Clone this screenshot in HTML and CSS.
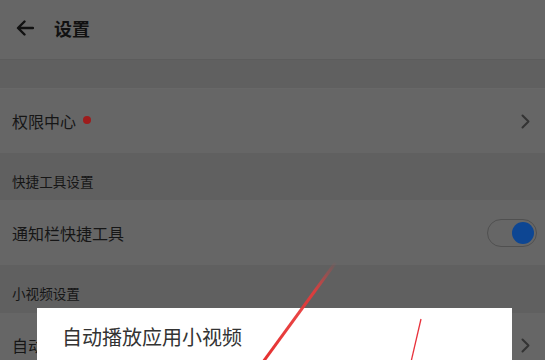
FILE: index.html
```html
<!DOCTYPE html>
<html lang="zh-CN">
<head>
<meta charset="utf-8">
<title>设置</title>
<link rel="stylesheet" href="styles.css">
</head>
<body>
<div class="page">
  <header class="topbar">
    <svg class="back" width="18" height="16" viewBox="0 0 18 16" aria-hidden="true">
      <path d="M17 8H2.5M8.5 1.5L2 8l6.5 6.5" fill="none" stroke="#111" stroke-width="2.4" stroke-linecap="round" stroke-linejoin="round"/>
    </svg>
    <h1 class="title">设置</h1>
  </header>
  <div class="gap"></div>
  <div class="row">
    <span class="label">权限中心</span><span class="dot"></span>
    <svg class="chev" width="9" height="15" viewBox="0 0 9 15" aria-hidden="true"><path d="M1.5 1.5l6 6-6 6" fill="none" stroke="#333" stroke-width="2" stroke-linecap="round" stroke-linejoin="round"/></svg>
  </div>
  <div class="section s1">快捷工具设置</div>
  <div class="row r2">
    <span class="label">通知栏快捷工具</span>
    <span class="toggle"><span class="knob"></span></span>
  </div>
  <div class="section s2">小视频设置</div>
  <div class="row">
    <span class="label">自动播放应用小视频</span>
    <svg class="chev" width="9" height="15" viewBox="0 0 9 15" aria-hidden="true"><path d="M1.5 1.5l6 6-6 6" fill="none" stroke="#333" stroke-width="2" stroke-linecap="round" stroke-linejoin="round"/></svg>
  </div>
</div>
<div class="dialog">
  <p class="dialog-title">自动播放应用小视频</p>
</div>
<svg class="annot" width="545" height="360" viewBox="0 0 545 360" aria-hidden="true">
  <defs>
    <linearGradient id="fade" x1="336" y1="262" x2="264" y2="362" gradientUnits="userSpaceOnUse">
      <stop offset="0" stop-color="#e83a3a" stop-opacity="0"/>
      <stop offset="0.3" stop-color="#e83a3a" stop-opacity="0.9"/>
      <stop offset="1" stop-color="#e53030" stop-opacity="1"/>
    </linearGradient>
  </defs>
  <line x1="336" y1="262" x2="263" y2="362" stroke="url(#fade)" stroke-width="3"/>
  <line x1="421" y1="319" x2="411" y2="362" stroke="#e8323c" stroke-width="1.3"/>
</svg>
</body>
</html>
```
FILE: styles.css
```css
html, body {
  margin: 0;
  padding: 0;
}
body {
  width: 545px;
  height: 360px;
  overflow: hidden;
  background: #666;
  font-family: "Noto Sans CJK SC", "Noto Sans", sans-serif;
  position: relative;
}
.page {
  display: flex;
  flex-direction: column;
}
.topbar {
  height: 60px;
  box-sizing: border-box;
  display: flex;
  align-items: center;
  padding: 0 0 4px 16px;
  background: #666;
  border-bottom: 1px solid #5c5c5c;
}
.back {
  display: block;
  margin-top: 1px;
}
.title {
  margin: 0 0 0 20px;
  font-size: 18px;
  font-weight: 700;
  color: #111;
  line-height: 24px;
}
.gap {
  height: 28px;
  background: #606060;
  border-bottom: 1px solid #686868;
}
.row {
  height: 64px;
  display: flex;
  align-items: center;
  padding: 0 15px 0 12px;
  background: #666;
}
.r2 {
  height: 65px;
  padding-right: 8px;
}
.label {
  font-size: 16px;
  color: #161616;
  line-height: 22px;
}
.dot {
  width: 8px;
  height: 8px;
  border-radius: 50%;
  background: #9e1c1c;
  margin: -2px 0 0 7px;
}
.chev {
  margin-left: auto;
  display: block;
}
.section {
  display: flex;
  align-items: flex-end;
  padding: 0 12px 9px;
  box-sizing: border-box;
  background: #606060;
  font-size: 13.6px;
  line-height: 20px;
  color: #161616;
}
.s1 {
  height: 47px;
}
.s2 {
  height: 48px;
  padding-bottom: 10px;
}
.toggle {
  margin-left: auto;
  width: 50px;
  height: 28px;
  box-sizing: border-box;
  border: 1.5px solid #505050;
  border-radius: 14px;
  display: flex;
  align-items: center;
  justify-content: flex-end;
  padding-right: 2px;
}
.knob {
  width: 22px;
  height: 22px;
  border-radius: 50%;
  background: #0d4693;
}
.dialog {
  position: absolute;
  left: 37px;
  top: 308px;
  width: 475px;
  height: 80px;
  background: #fff;
  box-sizing: border-box;
  padding: 14px 25px 0;
}
.dialog-title {
  margin: 0;
  font-size: 20px;
  line-height: 30px;
  color: #333;
}
.annot {
  position: absolute;
  left: 0;
  top: 0;
  pointer-events: none;
}
```
